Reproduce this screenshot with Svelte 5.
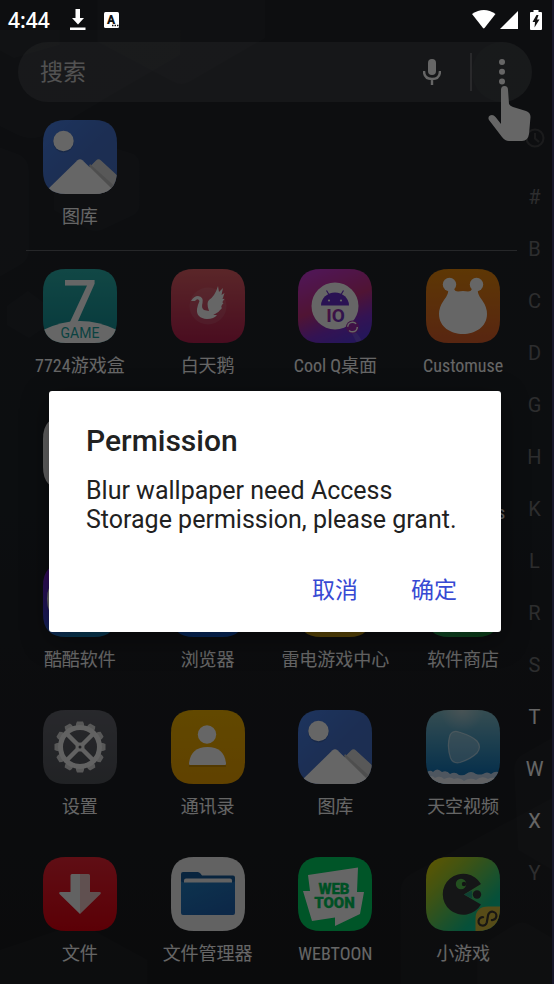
<script>
  const featured = [{ name: '图库', icon: 'gallery' }];

  const apps = [
    { name: '7724游戏盒', icon: 'game7' },
    { name: '白天鹅', icon: 'swan' },
    { name: 'Cool Q桌面', icon: 'coolq' },
    { name: 'Customuse', icon: 'customuse' },
    { name: '', icon: 'white' },
    { name: '', icon: 'white' },
    { name: '', icon: 'white' },
    { name: 'Game Tools', icon: 'white' },
    { name: '酷酷软件', icon: 'kuku' },
    { name: '浏览器', icon: 'browser' },
    { name: '雷电游戏中心', icon: 'thunder' },
    { name: '软件商店', icon: 'store' },
    { name: '设置', icon: 'settings' },
    { name: '通讯录', icon: 'contacts' },
    { name: '图库', icon: 'gallery' },
    { name: '天空视频', icon: 'sky' },
    { name: '文件', icon: 'download' },
    { name: '文件管理器', icon: 'folder' },
    { name: 'WEBTOON', icon: 'webtoon' },
    { name: '小游戏', icon: 'minigame' },
  ];

  const letters = ['#', 'B', 'C', 'D', 'G', 'H', 'K', 'L', 'R', 'S', 'T', 'W', 'X', 'Y'];
  const active = ['T', 'W', 'X'];
  const teeth = [0, 30, 60, 90, 120, 150, 180, 210, 240, 270, 300, 330];

  const fills = {
    gallery: 'url(#g-blue)',
    game7: 'url(#g-teal)',
    swan: 'url(#g-rose)',
    coolq: 'url(#g-violet)',
    customuse: 'url(#g-orange)',
    white: '#f4f4f4',
    kuku: 'url(#g-kuku)',
    browser: '#1268e8',
    thunder: '#e8b412',
    store: 'url(#g-green)',
    settings: 'url(#g-grey)',
    contacts: 'url(#g-amber)',
    sky: 'url(#g-sky)',
    download: 'url(#g-red)',
    folder: '#f4f4f4',
    webtoon: '#00d564',
    minigame: 'url(#g-mini)',
  };

  let open = $state(true);
</script>

{#snippet appIcon(name)}
  <svg class="app__icon" viewBox="0 0 74 74" aria-hidden="true">
    <g clip-path="url(#icon-clip)">
      <rect width="74" height="74" fill={fills[name]} />
      {#if name === 'gallery'}
        <circle cx="20.5" cy="22" r="10.5" fill="#000" opacity=".15" />
        <circle cx="20.5" cy="21" r="10.2" fill="#fff" />
        <path d="M30 64 L53 40.500 Q55.500 38 58 40.500 L76 57 V76 H30Z" fill="#dcdcdc" />
        <path d="M46 46 L76 76 V70 L47 44Z" fill="#c4c4c4" />
        <path d="M2 72 L34.500 40.300 Q37 38 39.500 40.300 L72 72 V76 H0Z" fill="#fff" />
      {:else if name === 'game7'}
        <text x="37" y="53" font-size="60" font-weight="500" text-anchor="middle" fill="#fff">7</text>
        <path d="M0 61 Q37 43 74 61 V76 H0Z" fill="#fff" />
        <text x="37" y="69" font-size="14" text-anchor="middle" fill="#1aa5a2">GAME</text>
      {:else if name === 'swan'}
        <circle cx="37" cy="37" r="18.500" fill="#fff" opacity=".1" />
        <path
          d="M20 32 Q23 27 27 27 Q33 28 31.500 34 Q30 39 33 41 L38 42 Q35 34 38 31 Q44 27 47 17 L48 23 L52 19 L50.500 26 L53.500 24 L51.500 30 L53.500 30 Q50 34 52.500 34 Q49 38 51 39 Q48 43 44 45 Q40 46 46 46 Q43 50 36 50 Q25 49 26 40 Q27 35 28.500 32 Q27 29 25 31 L24 32Z"
          fill="#fff" />
      {:else if name === 'coolq'}
        <path d="M50 58 Q60 62 66 76 L60 76 Q55 66 50 58Z" fill="#fff" opacity=".12" />
        <circle cx="37" cy="37" r="23.500" fill="#fff" />
        <path d="M23 36.500 A14 13 0 0 1 51 36.500Z" fill="#6a2fd0" />
        <path d="M28.500 21.500 L31.500 26.500 M45.500 21.500 L42.500 26.500" stroke="#6a2fd0" stroke-width="1.200" />
        <circle cx="31" cy="31.500" r="1.100" fill="#fff" />
        <circle cx="43" cy="31.500" r="1.100" fill="#fff" />
        <text x="37.500" y="53" font-size="19" font-weight="700" text-anchor="middle" fill="url(#g-io)">IO</text>
        <circle cx="54.500" cy="58" r="6.500" fill="#a02cb0" />
        <circle cx="54.500" cy="58" r="4.800" fill="none" stroke="#fff" stroke-width="1.500" stroke-dasharray="11 4" />
      {:else if name === 'customuse'}
        <g fill="#fff">
          <circle cx="23.500" cy="15.500" r="6.700" />
          <circle cx="50.500" cy="15.500" r="6.700" />
          <path d="M22 20 L28 20 Q29 22.500 32 22.500 Q37 21.500 42 22.500 Q45 22.500 46 20 L52 20 Q51 25 56 31 Q61 38 61 45 C61 58 49 65 37 65 C25 65 13 58 13 45 Q13 38 18 31 Q23 25 22 20Z" />
        </g>
      {:else if name === 'kuku'}
        <circle cx="37" cy="36" r="30" fill="none" stroke="#fff" stroke-width="6" />
      {:else if name === 'settings'}
        <g fill="#dcdcdc">
          {#each teeth as angle}
            <path d="M33 14 L34 11.500 H40 L41 14 V17 H33Z" transform="rotate({angle} 37 37)" />
          {/each}
        </g>
        <circle cx="37" cy="37" r="19.500" fill="none" stroke="#f4f4f4" stroke-width="5" />
        <path d="M23.500 23.500 L50.500 50.500 M50.500 23.500 L23.500 50.500" stroke="#f4f4f4" stroke-width="4.500" />
        <circle cx="37" cy="37" r="4.500" fill="#f4f4f4" />
        <circle cx="37" cy="37" r="1.500" fill="#55565c" />
      {:else if name === 'contacts'}
        <path d="M18 57 Q18 40 36 40 Q55 40 55 57Z" fill="#000" opacity=".15" />
        <circle cx="36" cy="24.500" r="9.200" fill="#fff" />
        <path d="M18 53 Q20 37 36.500 37 Q53 37 55 53 V54 Q55 55 54 55 H19 Q18 55 18 54Z" fill="#fff" />
      {:else if name === 'sky'}
        <circle cx="36" cy="0" r="22" fill="url(#g-sun)" />
        <path
          d="M24 25 Q27 20 33 22 Q46 26 51 31 Q56 37 51 43 Q45 49 34 52.500 Q27 54 24.500 48 Q20.500 36 24 25Z"
          fill="#fff" fill-opacity=".3" stroke="#fff" stroke-opacity=".5" stroke-width="1.200" />
        <path d="M0 63 Q4 59 7 62 Q11 57 16 62 Q21 60 24 64 Q29 61 33 65 Q38 66 40 64 Q45 60 50 64 Q54 65 57 64 Q61 61 65 64 Q70 60 74 63 V76 H0Z" fill="#c4d8ee" />
        <path d="M0 68 Q5 64 9 68 Q14 65 18 69 Q24 66 28 69 Q34 67 38 71 Q44 67 50 70 Q56 65 62 69 Q68 66 74 70 V76 H0Z" fill="#f2f6fb" />
      {:else if name === 'download'}
        <path d="M29 17 H37 V57 L16.500 37 Q15.500 35 17.500 35 H27.500 V18.500 Q27.500 17 29 17Z" fill="#f6f6f6" />
        <path d="M37 17 H45.500 Q47 17 47 18.500 V35 H56.500 Q58.500 35 57.500 37 L37 57Z" fill="#f0c8c8" />
      {:else if name === 'folder'}
        <path d="M12 15 H27 Q29 15 31 18.500 H62 Q64 18.500 64 20.500 V30 H10 V17 Q10 15 12 15Z" fill="#145b9c" />
        <rect x="13" y="21.500" width="48" height="8" rx="2" fill="#f4f4f4" />
        <path d="M10 23 Q10 25.500 13 25.500 H61 Q64 25.500 64 23 V56 Q64 58 62 58 H12 Q10 58 10 56Z" fill="url(#g-folder)" />
      {:else if name === 'webtoon'}
        <path d="M10 18 L60 10.500 L59 35 H66 L62 57 L37 69 V60.500 L14 64 L5 34 H12Z" fill="#fff" />
        <g font-size="15" font-weight="900" text-anchor="middle" fill="#00c85c" stroke="#00c85c" stroke-width=".3">
          <text x="36" y="37">WEB</text>
          <text x="36.500" y="50.500">TOON</text>
        </g>
      {:else if name === 'minigame'}
        <path d="M55 27 A20.500 20.500 0 1 0 55 47.500 L38 37.500Z" fill="#36383a" />
        <circle cx="35" cy="27" r="5.200" fill="#58c850" />
        <circle cx="38" cy="27" r="2.200" fill="#303234" />
        <path d="M38 37.500 L46 33.500 V41.500Z" fill="#25a080" />
        <circle cx="51" cy="37.500" r="4.200" fill="#36383a" />
        <path d="M49.500 76 V62 Q49.500 49.500 62 49.500 H76 V76Z" fill="#d9bd3c" />
        <path
          d="M57 61 A4.200 4.200 0 1 0 61.500 65.500 V58 A4.200 4.200 0 1 1 66 62.300"
          transform="rotate(10 61.500 61.500)" fill="none" stroke="#3c3a30" stroke-width="2.200" stroke-linecap="round" />
      {/if}
    </g>
  </svg>
{/snippet}

{#snippet appTile(app)}
  <a href="#{app.icon}" class="app" aria-label={app.name || app.icon}>
    {@render appIcon(app.icon)}
    <span class="app__name">{app.name}</span>
  </a>
{/snippet}

<!-- Shared gradients -->
<svg class="defs" aria-hidden="true">
  <defs>
    <clipPath id="icon-clip">
      <path d="M0 23 Q0 0 23 0 H51 Q74 0 74 23 V51 Q74 74 51 74 H23 Q0 74 0 51Z" />
    </clipPath>
    <linearGradient id="g-blue" x2="1" y2="1"><stop stop-color="#4a82ea" /><stop offset=".5" stop-color="#4674d0" /><stop offset="1" stop-color="#4672c8" /></linearGradient>
    <linearGradient id="g-teal" x2="0" y2="1"><stop stop-color="#2cb2ad" /><stop offset="1" stop-color="#128f96" /></linearGradient>
    <linearGradient id="g-rose" x2="0" y2="1"><stop stop-color="#e26066" /><stop offset="1" stop-color="#b82050" /></linearGradient>
    <linearGradient id="g-violet" x1=".2" x2=".6" y2="1"><stop stop-color="#c838d8" /><stop offset=".5" stop-color="#c83282" /><stop offset=".8" stop-color="#8030d0" /><stop offset="1" stop-color="#6038e0" /></linearGradient>
    <linearGradient id="g-io" x2="1" y2="1"><stop stop-color="#d02a90" /><stop offset="1" stop-color="#5034d8" /></linearGradient>
    <linearGradient id="g-orange" x2="0" y2="1"><stop stop-color="#ea8a0c" /><stop offset="1" stop-color="#dc5f2c" /></linearGradient>
    <linearGradient id="g-kuku" x2=".4" y2="1"><stop stop-color="#8a12d8" /><stop offset=".7" stop-color="#3c48e0" /><stop offset="1" stop-color="#1894d8" /></linearGradient>
    <linearGradient id="g-green" x2="1" y2="0"><stop stop-color="#2fbf66" /><stop offset="1" stop-color="#1ba03e" /></linearGradient>
    <linearGradient id="g-grey" x2="0" y2="1"><stop stop-color="#64656e" /><stop offset="1" stop-color="#53565c" /></linearGradient>
    <linearGradient id="g-amber" x2="0" y2="1"><stop stop-color="#f4b400" /><stop offset="1" stop-color="#f0a400" /></linearGradient>
    <linearGradient id="g-sky" x2="0" y2="1"><stop stop-color="#86c0cc" /><stop offset=".5" stop-color="#4098c4" /><stop offset=".85" stop-color="#1478bc" /></linearGradient>
    <radialGradient id="g-sun"><stop stop-color="#ffe8e0" stop-opacity=".4" /><stop offset="1" stop-color="#ffe8e0" stop-opacity="0" /></radialGradient>
    <linearGradient id="g-red" x2="0" y2="1"><stop stop-color="#ee2434" /><stop offset="1" stop-color="#e40010" /></linearGradient>
    <linearGradient id="g-folder" x2=".6" y2="1"><stop stop-color="#2180c4" /><stop offset="1" stop-color="#2065b4" /></linearGradient>
    <linearGradient id="g-mini" x2="1" y2="1"><stop stop-color="#f0d800" /><stop offset=".3" stop-color="#a0d030" /><stop offset=".75" stop-color="#10c890" /><stop offset="1" stop-color="#10c8b0" /></linearGradient>
  </defs>
</svg>

<div class="phone">
  <svg class="wallpaper" viewBox="0 0 554 984" preserveAspectRatio="none" aria-hidden="true">
    <g fill="#fff" fill-opacity=".025">
      <path d="M-20 30 H60 V45 L14 58 L-20 40Z" />
      <path d="M0 30 H181 V55 L110 96 L40 137 Q28 140 16 134 L0 126Z" />
      <path d="M98 0 H266 V38 L190 82 Q182 86 174 82 L98 42Z" />
      <path d="M-20 140 L20 155 Q29 160 29 172 V250 Q29 260 20 265 L-20 288Z" />
      <path d="M54 160 L96 142 L134 154 Q140 158 140 165 V205 Q140 211 134 215 L102 230 Q96 232 90 230 L54 210Z" />
      <path d="M7 306 L28 291 L48 306 V325 L29 338 L7 325Z" />
      <path d="M402 890 Q402 880 412 874 L554 798 V984 H402Z" />
      <path d="M516 770 Q516 760 524 755 L554 738 V870 L520 850Z" />
      <path d="M0 950 L80 923 L148 960 V984 H0Z" />
      <path d="M479 948 L516 925 Q524 920 532 925 L554 938 V984 H479Z" />
    </g>
  </svg>

  <!-- ─── STATUS BAR ─── -->
  <header class="status">
    <span class="status__time">4:44</span>
    <svg width="16" height="22" viewBox="0 0 16 22" fill="#fff" aria-hidden="true">
      <path d="M5.500 0 H10 V9 H14 L8 15.500 L2 9 H5.500Z M0 18.500 H15.500 V21 H0Z" />
    </svg>
    <svg class="status__input" width="16" height="16" viewBox="0 0 16 16" aria-hidden="true">
      <rect width="15" height="16" rx="1.500" fill="#fff" />
      <text x="7" y="12" font-size="12" font-weight="900" text-anchor="middle" fill="#111">A</text>
      <path d="M8 13.500 H9.500 M10.500 13.500 H12 M13 13.500 H14.500" stroke="#111" stroke-width="1.500" />
    </svg>
    <div class="status__right">
      <svg width="24" height="20" viewBox="0 0 24 20" fill="#fff" aria-hidden="true">
        <path d="M0 4 Q12 -4 23.500 4 L12.500 18 Q11.700 18.800 11 18Z" />
      </svg>
      <svg width="18" height="18" viewBox="0 0 18 18" fill="#fff" aria-hidden="true"><path d="M18 0 V18 H0Z" /></svg>
      <svg class="status__battery" width="12" height="20" viewBox="0 0 12 20" aria-hidden="true">
        <path d="M3.500 0 H8.500 V2 H11 Q12 2 12 3 V19 Q12 20 11 20 H1 Q0 20 0 19 V3 Q0 2 1 2 H3.500Z" fill="#fff" />
        <path d="M6.500 5 L2.500 12 H5 L4.500 17.500 L9.500 9.500 H7 L8.500 5Z" fill="#111" />
      </svg>
    </div>
  </header>

  <!-- ─── SEARCH ─── -->
  <div class="search">
    <input class="search__input" type="text" placeholder="搜索" aria-label="搜索" />
    <button class="search__mic" aria-label="Voice search">
      <svg width="18" height="26" viewBox="0 0 18 26" aria-hidden="true">
        <rect x="5" width="8" height="16" rx="4" fill="#fff" />
        <path d="M1 12 Q1 20 9 20 Q17 20 17 12 M9 20 V26" fill="none" stroke="#fff" stroke-width="2.400" />
      </svg>
    </button>
    <button class="search__more" aria-label="More">
      <svg width="6" height="26" viewBox="0 0 6 26" fill="#fff" aria-hidden="true">
        <circle cx="3" cy="3" r="3" /><circle cx="3" cy="12.700" r="3" /><circle cx="3" cy="22.500" r="3" />
      </svg>
      <svg class="search__hand" width="44" height="56" viewBox="0 0 44 56" aria-hidden="true">
        <path
          d="M13 4 Q13 0 16.500 0 Q20 0 20 4 L21 18 Q22 20 25 21 L38 25 Q42.500 26.500 42.500 31 L41 48 Q40 55 34 55 H21 Q17 55 14 51 L1 34 Q-.5 31 2 29.500 Q5 28 7.500 31 L13 38Z"
          fill="#fff" />
      </svg>
    </button>
  </div>

  <!-- ─── DRAWER ─── -->
  <div class="drawer">
    <main class="drawer__apps">
      <div class="grid">
        {#each featured as app}
          {@render appTile(app)}
        {/each}
      </div>
      <hr class="divider" />
      <div class="grid">
        {#each apps as app}
          {@render appTile(app)}
        {/each}
      </div>
    </main>

    <nav class="index" aria-label="Index">
      <a href="#recent" class="index__recent" aria-label="Recent">
        <svg width="20" height="20" viewBox="0 0 20 20" fill="none" stroke="currentColor" stroke-width="2" aria-hidden="true">
          <circle cx="10" cy="10" r="8.500" /><path d="M10 5 V10.500 L14 14" />
        </svg>
      </a>
      {#each letters as letter}
        <a href="#{letter}" class="index__letter" class:index__letter--active={active.includes(letter)}>{letter}</a>
      {/each}
    </nav>
  </div>

  <!-- ─── DIALOG ─── -->
  {#if open}
    <div class="scrim">
      <div class="dialog" role="alertdialog" aria-labelledby="dialog-title" aria-describedby="dialog-text">
        <h2 class="dialog__title" id="dialog-title">Permission</h2>
        <p class="dialog__text" id="dialog-text">Blur wallpaper need Access Storage permission, please grant.</p>
        <div class="dialog__actions">
          <button class="dialog__btn" onclick={() => (open = false)}>取消</button>
          <button class="dialog__btn" onclick={() => (open = false)}>确定</button>
        </div>
      </div>
    </div>
  {/if}
</div>

<style>
  :global(body) {
    margin: 0;
    background: #0c0d10;
  }

  .defs {
    position: absolute;
    width: 0;
    height: 0;
  }

  .phone {
    position: relative;
    box-sizing: border-box;
    min-height: 100vh;
    border-right: 2px solid #17172a;
    background: linear-gradient(#22252a, #20242a 45%, #1b1c1f);
    font-family: Roboto, "Noto Sans CJK SC", sans-serif;
    color: #fff;
  }
  .wallpaper {
    position: absolute;
    inset: 0;
    width: 100%;
    height: 100%;
  }
  a { color: inherit; text-decoration: none; }
  button {
    padding: 0;
    border: 0;
    background: none;
    font: inherit;
    color: inherit;
    cursor: pointer;
  }
  svg { display: block; }

  /* ─── Status bar ─── */
  .status {
    position: relative;
    z-index: 3;
    display: flex;
    align-items: center;
    height: 42px;
    box-sizing: border-box;
    padding: 0 10px 3px 8px;
  }
  .status__time {
    width: 62px;
    font-family: "Open Sans", sans-serif;
    font-size: 21px;
    font-weight: 600;
  }
  .status__input { margin-left: 18px; }
  .status__right {
    display: flex;
    align-items: center;
    gap: 4px;
    margin-left: auto;
  }
  .status__battery { margin-left: 8px; }

  /* ─── Search ─── */
  .search {
    position: relative;
    display: flex;
    align-items: center;
    height: 60px;
    margin: 0 20px 0 18px;
    border-radius: 30px;
    background: rgba(255, 255, 255, 0.1);
  }
  .search__input {
    flex: 1;
    min-width: 0;
    padding: 0 22px;
    border: 0;
    outline: 0;
    background: none;
    font: inherit;
    font-size: 23px;
    color: #fff;
  }
  .search__input::placeholder { color: #ccc; opacity: 1; }
  .search__mic {
    display: grid;
    place-items: center;
    width: 78px;
    height: 38px;
    border-right: 2px solid #66686c;
  }
  .search__more {
    position: relative;
    display: grid;
    place-items: center;
    width: 60px;
    height: 60px;
    border-radius: 50%;
    background: rgba(255, 255, 255, 0.03);
  }
  .search__hand {
    position: absolute;
    top: 44px;
    left: 16px;
    z-index: 1;
  }

  /* ─── Drawer ─── */
  .drawer {
    position: relative;
    display: flex;
    align-items: flex-start;
    padding-left: 16px;
  }
  .drawer__apps {
    flex: 1;
    padding: 18px 0;
  }
  .grid {
    display: grid;
    grid-template-columns: repeat(4, 1fr);
    row-gap: 38px;
  }
  .app {
    display: flex;
    flex-direction: column;
    align-items: center;
    gap: 11px;
  }
  .app__icon {
    width: 74px;
    height: 74px;
  }
  .app__name {
    height: 24px;
    font-family: "Roboto Condensed", Roboto, "Noto Sans CJK SC", sans-serif;
    font-size: 18px;
    line-height: 24px;
    white-space: nowrap;
  }
  .divider {
    height: 1px;
    margin: 21px 10px 18px;
    border: 0;
    background: #606266;
  }

  /* ─── Letter index ─── */
  .index {
    display: flex;
    flex-direction: column;
    width: 35px;
    margin: 10px 0 0 -10px;
    font-size: 20px;
    color: #707174;
  }
  .index__recent {
    display: grid;
    place-items: center;
    height: 52px;
    margin-bottom: 7px;
    color: #444548;
  }
  .index__letter {
    height: 52px;
    line-height: 52px;
    text-align: center;
  }
  .index__letter--active { color: #fff; }

  /* ─── Dialog ─── */
  .scrim {
    position: absolute;
    inset: 0;
    z-index: 2;
    display: flex;
    align-items: center;
    box-sizing: border-box;
    padding: 38px 51px 0 49px;
    background: rgba(0, 0, 0, 0.6);
  }
  .dialog {
    flex: 1;
    padding: 32px 26px 20px 37px;
    border-radius: 3px;
    background: #fff;
    box-shadow: 0 8px 28px rgba(0, 0, 0, 0.4);
    color: #212121;
  }
  .dialog__title {
    margin: 0 0 17px;
    font-size: 30px;
    font-weight: 500;
    line-height: 36px;
  }
  .dialog__text {
    margin: 0 0 30px;
    font-size: 25px;
    line-height: 29px;
  }
  .dialog__actions {
    display: flex;
    justify-content: flex-end;
    gap: 17px;
  }
  .dialog__btn {
    width: 82px;
    height: 48px;
    font-size: 23px;
    color: #3749d3;
  }
</style>
